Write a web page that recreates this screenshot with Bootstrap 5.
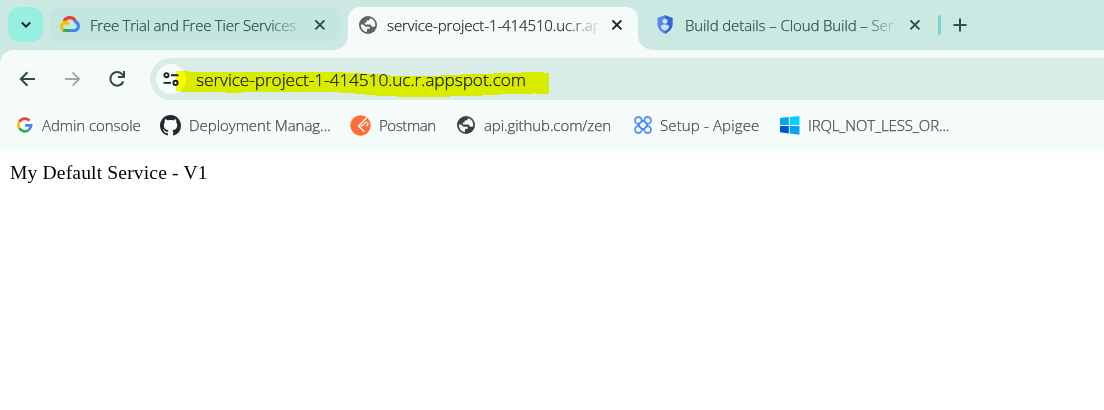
<!DOCTYPE html>
<html lang="en">
<head>
<meta charset="utf-8">
<meta name="viewport" content="width=device-width, initial-scale=1">
<title>service-project-1-414510.uc.r.appspot.com</title>
<link href="https://cdn.jsdelivr.net/npm/bootstrap@5.3.0/dist/css/bootstrap.min.css" rel="stylesheet">
<script src="https://cdn.jsdelivr.net/npm/bootstrap@5.3.0/dist/js/bootstrap.bundle.min.js" defer></script>
<style>
body{font-family:"Open Sans","Noto Sans",sans-serif;font-weight:300;background:#fff;color:#1b2b27;overflow:hidden}
svg{display:block;flex:none}
header{-webkit-text-stroke:.25px currentColor}
.tabstrip{height:50px;background:#cce8e2;padding:7px 0 0 8px}
.tab-search{width:35px;height:35px;border-radius:12px;background:#97efe2;margin-right:7px}
.browser-tab{width:290px;height:35px;border-radius:12px;color:#304e48;padding-left:10px}
.tab-idle{background:#c3e6df}
.tab-current{height:43px;padding-bottom:8px;border-radius:12px 12px 0 0;background:#f5fbf9;color:#1c2624;margin:0 8px}
.tab-current::before,.tab-current::after{content:"";position:absolute;bottom:0;width:14px;height:14px}
.tab-current::before{left:-14px;background:radial-gradient(circle at 0 0,transparent 13.5px,#f5fbf9 14px)}
.tab-current::after{right:-14px;background:radial-gradient(circle at 100% 0,transparent 13.5px,#f5fbf9 14px)}
.tab-title{width:210px;font-size:15px;line-height:24px;white-space:nowrap;-webkit-mask-image:linear-gradient(90deg,#000 178px,transparent 214px);mask-image:linear-gradient(90deg,#000 178px,transparent 214px)}
.title-one{letter-spacing:-.23px}
.title-two{letter-spacing:-.11px}
.title-three{letter-spacing:-.1px}
.tab-divider{width:3px;height:20px;border-radius:2px;background:#75d9cc;margin:0 12px 0 2px}
.corner-fill{background:#cce8e2}
.toolbar-row{height:50px;background:#f5fbf9;border-top-left-radius:14px;padding:8px 0 0 18px}
.nav-icons{width:132px;height:42px}
.omnibox{height:42px;border-radius:21px 0 0 21px;background:#d9ece7;padding-left:6px}
.site-chip{width:30px;height:30px;border-radius:50%;background:#f5fbf9}
.address{font-size:17.3px;line-height:24px;margin-left:10px;padding-top:1px;color:#111b18;letter-spacing:-.08px}
.marker-stroke{left:26px;top:13px;mix-blend-mode:multiply}
.bookmarks{height:51px;background:#f5fbf9;font-size:15px;line-height:24px;color:#414e4a;padding-left:16px;padding-bottom:1px}
.bookmark{white-space:nowrap}
.bm-admin{letter-spacing:-.06px}
.bm-deploy{letter-spacing:-.03px}
.bm-postman{letter-spacing:-.4px}
.bm-api{letter-spacing:-.08px}
.bm-setup{letter-spacing:.14px}
.bm-irql{letter-spacing:-.14px}
.document-text{font:19.6px/24px "Liberation Serif",serif;letter-spacing:.14px;color:#000;padding:10px 0 0 10px}
</style>
</head>
<body>
<svg width="0" height="0" class="position-absolute"><defs>
<symbol id="close" viewBox="0 0 12 12"><path d="M1.4 1.4l9 9m0-9l-9 9" fill="none" stroke="currentColor" stroke-width="2"/></symbol>
<symbol id="globe" viewBox="0 0 18 18"><circle cx="9" cy="9" r="9" fill="currentColor"/><path d="M11 2.200C10.800 3.800 10 4.500 8.600 4.500H7.600V6.600H5.800V8.500H10.500C12 8.500 12.700 9.400 12.700 10.800H14.900C15.600 10.800 16 10.400 16.300 9.800A7.300 7.300 0 0 0 11 2.200zM1.900 8.600C1.700 12.500 4.200 15.600 7.900 16.200V14.200C7.900 13.400 8.500 12.800 9.300 12.800H10.700V10.700H6.900C6.500 10.700 6.200 10.500 5.900 10.300L4 8.600z" fill="#f5fbf9" transform="translate(0 18) scale(1 -1) rotate(0) translate(0 18) scale(1 -1)"/></symbol>
</defs></svg>

<header>
  <div class="tabstrip d-flex align-items-start">
    <div class="tab-search d-flex align-items-center justify-content-center"><svg width="12" height="8" viewBox="0 0 12 8"><path d="M1.8 1.5L6 5.6l4.2-4.1" fill="none" stroke="#10221e" stroke-width="2"/></svg></div>
    <div class="browser-tab tab-idle d-flex align-items-center">
      <svg width="20" height="17" viewBox="0 0 20 17"><path d="M4.200 5.300C5.200 2.700 7.200 1.700 9.800 1.700c2.700 0 5 1.700 5.800 4.400" fill="none" stroke="#ea4335" stroke-width="3.200"/><path d="M14.900 5.200c2.200.9 3.500 2.600 3.500 5 0 2.800-1.900 4.300-4.200 4.300H10" fill="none" stroke="#4285f4" stroke-width="3.200"/><path d="M10 14.500H5.300c-1 0-1.700-.2-2.400-.7" fill="none" stroke="#34a853" stroke-width="3.200"/><path d="M3.200 14C1 12 1.200 9 3.100 7.500c1.900-1.400 4-.8 5.500.9" fill="none" stroke="#fbbc04" stroke-width="3.200"/></svg>
      <div class="tab-title title-one" style="margin-left:10px">Free Trial and Free Tier Services</div>
      <svg width="12" height="12" style="margin-left:14px"><use href="#close"/></svg>
    </div>
    <div class="browser-tab tab-current position-relative d-flex align-items-center">
      <svg width="18" height="18" style="margin-left:1px;color:#5f6368"><use href="#globe"/></svg>
      <div class="tab-title title-two" style="margin-left:10px">service-project-1-414510.uc.r.ap</div>
      <svg width="12" height="12" style="margin-left:14px"><use href="#close"/></svg>
    </div>
    <div class="browser-tab d-flex align-items-center">
      <svg width="16" height="19" viewBox="0 0 16 19" style="margin-left:1px"><path d="M8 .3L15.500 3v6c0 4.500-3.200 8-7.500 9.700C3.700 17 .5 13.500.5 9V3z" fill="#5b87e8"/><path d="M8 .3L15.500 3v6c0 4.500-3.200 8-7.500 9.700z" fill="#3367d6"/><circle cx="8" cy="6.200" r="2.500" fill="#c9e1f5"/><path d="M3.800 11.800C3.800 9.900 6 9.400 8 9.400s4.200.5 4.200 2.400c-.5 1.800-2 3.200-4.200 4-2.200-.8-3.700-2.200-4.200-4z" fill="#c9e1f5"/></svg>
      <div class="tab-title title-three" style="margin-left:12px">Build details – Cloud Build – Ser</div>
      <svg width="12" height="12" style="margin-left:14px"><use href="#close"/></svg>
    </div>
    <div class="d-flex align-items-center" style="height:36px"><div class="tab-divider"></div>
      <svg width="14" height="14" viewBox="0 0 14 14"><path d="M7 .5v13M.5 7h13" stroke="#304e48" stroke-width="2"/></svg></div>
  </div>

  <div class="corner-fill"><div class="toolbar-row d-flex">
    <div class="nav-icons d-flex align-items-center">
      <svg width="18" height="18" viewBox="0 0 18 18"><path d="M17 9H3M9.500 2.300L2.800 9l6.700 6.700" fill="none" stroke="#304b45" stroke-width="2"/></svg>
      <svg width="18" height="18" viewBox="0 0 18 18" style="margin-left:28px"><path d="M1 9h14M8.500 2.300L15.200 9l-6.700 6.700" fill="none" stroke="#a1a8a6" stroke-width="1.800"/></svg>
      <svg width="18" height="18" viewBox="0 0 18 18" style="margin-left:26px"><path d="M15.400 11.500A6.800 6.800 0 1 1 14 4.100l1.700 1.800M16 1v5.900h-6" fill="none" stroke="#304b45" stroke-width="2"/></svg>
    </div>
    <div class="omnibox position-relative flex-grow-1 d-flex align-items-center">
      <div class="site-chip d-flex align-items-center justify-content-center"><svg width="16" height="14" viewBox="0 0 16 14"><g fill="none" stroke="#17211e" stroke-width="1.900"><circle cx="3.500" cy="3.200" r="2.100"/><path d="M8 3.200h7.500M.5 10.900H8"/><circle cx="12.500" cy="10.900" r="2.100"/></g></svg></div>
      <div class="address">service-project-1-414510.uc.r.appspot.com</div>
      <svg class="marker-stroke position-absolute" width="374" height="27" viewBox="0 0 374 27"><path d="M0 0H13V1H124L170 1V2H187V3H204V4H215V5H265V4H285V3H317V2H346V1H368V2H373V23H360V22H357V23H325V24H306V25H274V26H221V25H199V24H189V23H179V22H164V21H67V22H50V21H5V20H0z" fill="#ff0"/></svg>
    </div>
  </div></div>

  <nav class="bookmarks d-flex align-items-center">
    <div class="bookmark d-flex align-items-center" style="width:144px">
      <svg width="18" height="18" viewBox="0 0 18 18"><circle cx="9" cy="9" r="9" fill="#fff"/><g fill="none" stroke-width="2.700"><path d="M3.400 5.700A6.300 6.300 0 0 1 13.500 4.600" stroke="#ea4335"/><path d="M3.400 5.700a6.300 6.300 0 0 0 0 6.600" stroke="#fbbc04"/><path d="M3.400 12.300a6.300 6.300 0 0 0 9.500 1.600" stroke="#34a853"/><path d="M12.900 13.900A6.300 6.300 0 0 0 15.200 9.300H9" stroke="#4285f4"/></g></svg>
      <span class="bm-admin" style="margin-left:8px">Admin console</span></div>
    <div class="bookmark d-flex align-items-center" style="width:190px">
      <svg width="21" height="21" viewBox="0 0 16 16"><path fill="#24292f" d="M8 0C3.580 0 0 3.580 0 8c0 3.540 2.290 6.530 5.470 7.590.4.070.55-.17.55-.38 0-.19-.01-.82-.01-1.490-2.010.37-2.530-.49-2.690-.94-.09-.23-.48-.94-.82-1.130-.28-.15-.68-.52-.01-.53.63-.01 1.080.58 1.230.82.72 1.210 1.870.87 2.330.66.070-.52.280-.87.510-1.070-1.780-.2-3.640-.89-3.640-3.950 0-.87.310-1.590.82-2.150-.08-.2-.36-1.020.08-2.120 0 0 .67-.21 2.200.82.64-.18 1.320-.27 2-.27s1.360.09 2 .27c1.530-1.040 2.200-.82 2.200-.82.44 1.100.16 1.920.08 2.120.51.56.82 1.270.82 2.150 0 3.070-1.870 3.750-3.650 3.950.29.25.54.73.54 1.480 0 1.070-.01 1.930-.01 2.200 0 .21.15.46.55.38A8.010 8.010 0 0 0 16 8c0-4.420-3.580-8-8-8z"/></svg>
      <span class="bm-deploy" style="margin-left:8px">Deployment Manag...</span></div>
    <div class="bookmark d-flex align-items-center" style="width:107px">
      <svg width="21" height="21" viewBox="0 0 21 21"><circle cx="10.500" cy="10.500" r="10.200" fill="#ff6c37"/><path d="M16.500 3L8.500 11l6 5.800" fill="none" stroke="#fff" stroke-width="1.500"/><path d="M8.500 11h3.400l4.600-4.400" fill="none" stroke="#fff" stroke-width="1.200"/><path d="M17.200 7.500c1.300 1 .9 2.800-.8 3.700" fill="none" stroke="#fff" stroke-width="1.200"/></svg>
      <span class="bm-postman" style="margin-left:8px">Postman</span></div>
    <div class="bookmark d-flex align-items-center" style="width:177px">
      <svg width="18" height="18" style="color:#3c4043"><use href="#globe"/></svg>
      <span class="bm-api" style="margin-left:9px">api.github.com/zen</span></div>
    <div class="bookmark d-flex align-items-center" style="width:146px">
      <svg width="18" height="18" viewBox="0 0 18 18"><g fill="none" stroke="#5a90f2" stroke-width="1.800"><circle cx="4.400" cy="4.400" r="3.400"/><circle cx="13.600" cy="4.400" r="3.400"/><circle cx="4.400" cy="13.600" r="3.400"/><circle cx="13.600" cy="13.600" r="3.400"/><rect x="5.500" y="5.500" width="7" height="7" rx="1.800" transform="rotate(45 9 9)" fill="#f5fbf9" stroke="#4285f4"/></g></svg>
      <span class="bm-setup" style="margin-left:8px">Setup - Apigee</span></div>
    <div class="bookmark d-flex align-items-center">
      <svg width="20" height="19" viewBox="0 0 20 19"><path d="M0 2L8.800 1V8.900H0z" fill="#08a5ef"/><path d="M9.800 .9L19.500 0v8.900H9.800z" fill="#08d0fb"/><path d="M0 9.900h8.800v7.500L0 16.200z" fill="#0055d4"/><path d="M9.800 9.900h9.700v8.800l-9.700-1.200z" fill="#06a3ee"/></svg>
      <span class="bm-irql" style="margin-left:8px">IRQL_NOT_LESS_OR...</span></div>
  </nav>
</header>
<main class="document-text">My Default Service - V1</main>
</body>
</html>
